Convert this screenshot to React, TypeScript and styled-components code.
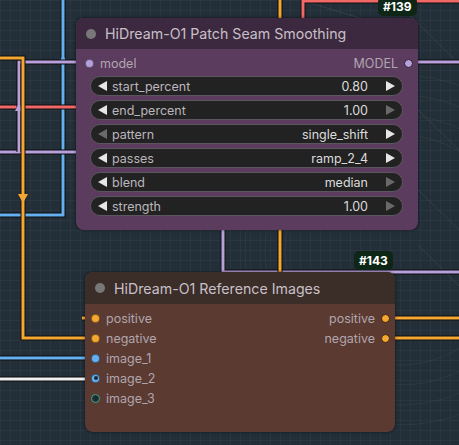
import styled, { createGlobalStyle } from 'styled-components'

const GlobalStyle = createGlobalStyle`
    body {
        margin: 0;
        background: #222e38;
        font-family: Inter, 'Noto Sans', 'Liberation Sans', sans-serif;
    }
`

const colors = {
    orange: '#f5a732',
    blue: '#64b0f0',
    lavender: '#b7a0dc',
    red: '#f26868',
    white: '#f0f0f0',
}

const Canvas = styled.div`
    position: relative;
    width: 459px;
    height: 445px;
    overflow: hidden;
    background-color: #222e38;
    background-image: linear-gradient(rgba(255, 255, 255, 0.035) 1px, transparent 1px),
        linear-gradient(90deg, rgba(255, 255, 255, 0.035) 1px, transparent 1px);
    background-size: 10px 10px;
`

const Layer = styled.svg`
    position: absolute;
    inset: 0;
    width: 459px;
    height: 445px;
`

const Node = styled.div<{ $left: number; $top: number; $width: number; $body: string }>`
    position: absolute;
    left: ${(p) => p.$left}px;
    top: ${(p) => p.$top}px;
    width: ${(p) => p.$width}px;
    background: ${(p) => p.$body};
    border-radius: 8px;
    box-shadow: 0 0 3px rgba(0, 0, 0, 0.6);
`

const Title = styled.div<{ $bg: string; $height: number }>`
    display: flex;
    align-items: center;
    gap: 9px;
    height: ${(p) => p.$height}px;
    padding-left: 10px;
    background: ${(p) => p.$bg};
    border-radius: 8px 8px 0 0;
    color: #c8c0c8;
    font-size: 14.2px;
`

const TitleDot = styled.span`
    width: 10px;
    height: 10px;
    border-radius: 50%;
    background: #787878;
`

const Badge = styled.div<{ $left: number; $top: number }>`
    position: absolute;
    left: ${(p) => p.$left}px;
    top: ${(p) => p.$top}px;
    padding: 0 5px;
    height: 19px;
    line-height: 19px;
    border-radius: 5px;
    background: #0e2616;
    color: #ffffff;
    font-size: 12px;
    font-weight: 700;
`

const Body = styled.div<{ $pad: string }>`
    display: flex;
    flex-direction: column;
    padding: ${(p) => p.$pad};
`

const SlotRow = styled.div`
    display: flex;
    align-items: center;
    justify-content: space-between;
    height: 20px;
`

const Slot = styled.div<{ $out?: boolean }>`
    display: flex;
    align-items: center;
    flex-direction: ${(p) => (p.$out ? 'row-reverse' : 'row')};
    gap: 6px;
    color: #b0a6ae;
    font-size: 12.5px;
`

const Dot = styled.span<{ $color: string; $ring?: string; $hole?: boolean }>`
    position: relative;
    box-sizing: border-box;
    width: 9px;
    height: 9px;
    border-radius: 50%;
    background: ${(p) => p.$color};
    border: 1px solid ${(p) => p.$ring ?? 'rgba(0, 0, 0, 0.45)'};
    &::after {
        content: '';
        display: ${(p) => (p.$hole ? 'block' : 'none')};
        position: absolute;
        left: 1.5px;
        top: 1.5px;
        width: 4px;
        height: 4px;
        border-radius: 50%;
        background: #1c2a30;
    }
`

const Widgets = styled.div`
    display: flex;
    flex-direction: column;
    gap: 4px;
    margin-top: 3px;
`

const Widget = styled.div`
    display: flex;
    align-items: center;
    box-sizing: border-box;
    height: 20px;
    padding: 0 7px;
    border-radius: 10px;
    background: #222222;
    border: 1px solid #5c5560;
    font-size: 12.5px;
`

const WidgetLabel = styled.span`
    flex: 1;
    margin-left: 5px;
    color: #bcb6bc;
`

const WidgetValue = styled.span`
    margin-right: 18px;
    color: #dddddd;
`

const Arrow = ({ dir, on }: { dir: 'l' | 'r'; on: boolean }) => (
    <svg width="9" height="10" viewBox="0 0 9 10">
        <path d={dir === 'l' ? 'M9 0 L0 5 L9 10 Z' : 'M0 0 L9 5 L0 10 Z'} fill={on ? '#e6e6e6' : '#6a6a6a'} />
    </svg>
)

const Wire = ({ d, color }: { d: string; color: string }) => (
    <g fill="none" strokeLinejoin="miter">
        <path d={d} stroke="#0c0c0c" strokeWidth={5} />
        <path d={d} stroke={color} strokeWidth={3} />
    </g>
)

const Tri = ({ x, y, up, color }: { x: number; y: number; up: boolean; color: string }) => (
    <path
        d={up ? `M${x - 4} ${y + 4} L${x} ${y - 4} L${x + 4} ${y + 4} Z` : `M${x - 5} ${y - 4} L${x} ${y + 5} L${x + 5} ${y - 4} Z`}
        fill={color}
    />
)

const widgets = [
    { label: 'start_percent', value: '0.80', l: true, r: true },
    { label: 'end_percent', value: '1.00', l: true, r: false },
    { label: 'pattern', value: 'single_shift', l: false, r: true },
    { label: 'passes', value: 'ramp_2_4', l: true, r: true },
    { label: 'blend', value: 'median', l: true, r: false },
    { label: 'strength', value: '1.00', l: true, r: false },
]

const refInputs = [
    { name: 'positive', color: colors.orange },
    { name: 'negative', color: colors.orange },
    { name: 'image_1', color: colors.blue },
    { name: 'image_2', color: colors.blue, hole: true },
    { name: 'image_3', color: '#1e3434', ring: '#4aa08e', hole: true },
]
const refOutputs = ['positive', 'negative']

export default function App() {
    return (
        <Canvas>
            <GlobalStyle />
            <Layer viewBox="0 0 459 445">
                <g stroke="#9aa6a0" strokeOpacity={0.14} fill="none" strokeWidth={1}>
                    <path d="M395 0 L459 64" />
                    <path d="M418 110 L459 150" />
                    <path d="M418 190 L459 230" />
                    <path d="M418 245 L459 286" />
                    <path d="M300 0 L360 18" />
                </g>
                <g stroke="#b4b89a" strokeOpacity={0.08} fill="none" strokeWidth={1}>
                    <circle cx="400" cy="250" r="115" />
                    <circle cx="400" cy="250" r="135" />
                    <circle cx="400" cy="250" r="155" />
                    <circle cx="400" cy="250" r="175" />
                </g>
                <Wire d="M63 0 V215 H0" color={colors.blue} />
                <Tri x={63} y={59} up color={colors.blue} />
                <Wire d="M0 107 H80" color={colors.red} />
                <Wire d="M0 152 H80" color={colors.lavender} />
                <Wire d="M19 152 V62 H82" color={colors.lavender} />
                <Tri x={19} y={107} up color={colors.lavender} />
                <Wire d="M0 58 H23 V338 H88" color={colors.orange} />
                <Tri x={23} y={198} up={false} color={colors.orange} />
                <Wire d="M303 20 V1 H459" color={colors.red} />
                <Wire d="M280 0 V20" color={colors.orange} />
                <Wire d="M223 226 V272 H459" color={colors.lavender} />
                <Wire d="M280 226 V276" color={colors.orange} />
                <Wire d="M412 62 H459" color={colors.lavender} />
                <Wire d="M0 358 H88" color={colors.blue} />
                <Wire d="M0 379 H88" color={colors.white} />
                <Wire d="M390 318 H459" color={colors.orange} />
                <Wire d="M390 338 H459" color={colors.orange} />
                <Wire d="M82 318 H88" color={colors.orange} />
            </Layer>

            <Node $left={76} $top={18} $width={342} $body="#5b3b5e">
                <Title $bg="#3c293f" $height={31}>
                    <TitleDot />
                    HiDream-O1 Patch Seam Smoothing
                </Title>
                <Body $pad="4px 15px 14px 14px">
                    <SlotRow style={{ margin: '0 -10px 0 -5px' }}>
                        <Slot>
                            <Dot $color={colors.lavender} />
                            model
                        </Slot>
                        <Slot $out>
                            <Dot $color={colors.lavender} $ring="#2a1f2c" />
                            MODEL
                        </Slot>
                    </SlotRow>
                    <Widgets>
                        {widgets.map((w) => (
                            <Widget key={w.label}>
                                <Arrow dir="l" on={w.l} />
                                <WidgetLabel>{w.label}</WidgetLabel>
                                <WidgetValue>{w.value}</WidgetValue>
                                <Arrow dir="r" on={w.r} />
                            </Widget>
                        ))}
                    </Widgets>
                </Body>
            </Node>
            <Badge $left={378} $top={-3}>#139</Badge>

            <Node $left={85} $top={272} $width={310} $body="#5b3a31">
                <Title $bg="#3b2d28" $height={32}>
                    <TitleDot />
                    HiDream-O1 Reference Images
                </Title>
                <Body $pad="4px 5px 24px 6px">
                    {refInputs.map((input, i) => (
                        <SlotRow key={input.name}>
                            <Slot>
                                <Dot $color={input.color} $ring={input.ring} $hole={input.hole} />
                                {input.name}
                            </Slot>
                            {refOutputs[i] && (
                                <Slot $out>
                                    <Dot $color={colors.orange} $ring="#3a2210" />
                                    {refOutputs[i]}
                                </Slot>
                            )}
                        </SlotRow>
                    ))}
                </Body>
            </Node>
            <Badge $left={354} $top={251}>#143</Badge>
        </Canvas>
    )
}
